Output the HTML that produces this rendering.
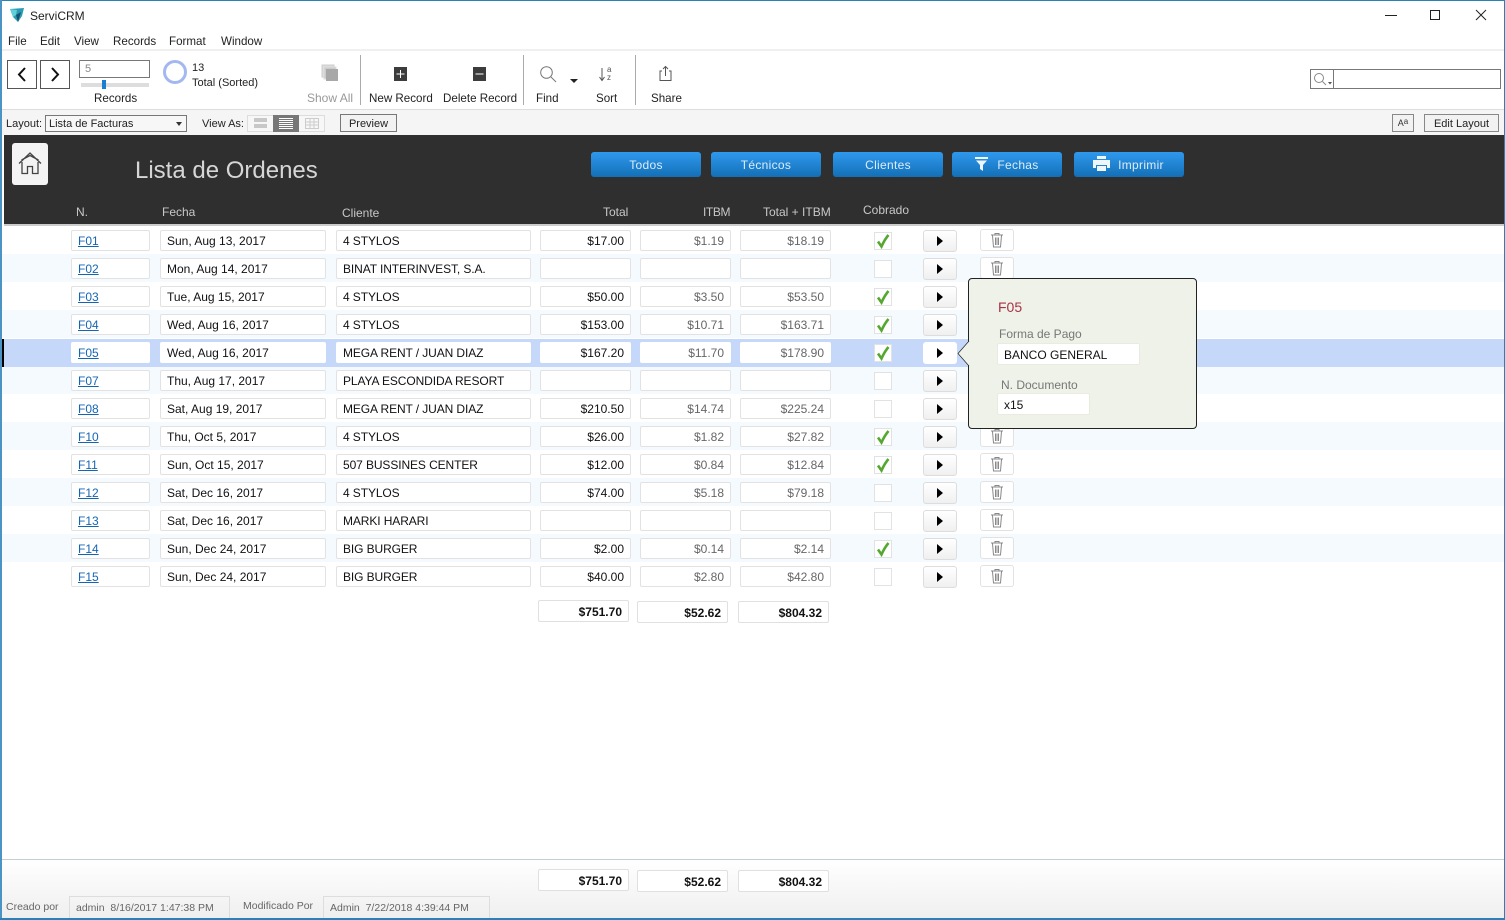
<!DOCTYPE html>
<html><head><meta charset="utf-8"><title>ServiCRM</title>
<style>
*{box-sizing:border-box}
html,body{margin:0;padding:0;width:1505px;height:920px;overflow:hidden;background:#fff;font-family:"Liberation Sans",sans-serif;font-size:11.6px;color:#222}
.a{position:absolute;white-space:nowrap}
#bl{position:absolute;left:0;top:0;width:2px;height:920px;background:#4a93c2;z-index:9}
#bt{position:absolute;left:0;top:0;width:1505px;height:1px;background:#2b80b5;z-index:9}
#br{position:absolute;right:0;top:0;width:1px;height:920px;background:#2b80b5;z-index:9}
#bb{position:absolute;left:0;top:918px;width:1505px;height:2px;background:#2b80b5;z-index:9}
.tb{font-size:11.6px;color:#222;text-align:center}
.sep{position:absolute;width:1px;background:#aaa;top:55px;height:50px}
.row{position:absolute;left:2px;width:1503px;height:28px}
.row.o{background:#f4fafd}
.row.s{background:#c6d8fa}
.row.s:before{content:"";position:absolute;left:0;top:0;width:2px;height:28px;background:#000}
.f{position:absolute;top:4px;height:21px;background:#fff;border:1px solid #e2e2e2;border-radius:2px;line-height:21px;padding:0 6px;font-size:12px;color:#111;white-space:nowrap;overflow:hidden}
.s .f{border-color:#fff}
.n{left:69px;width:79px;color:#1565b5;text-decoration:underline}
.d{left:158px;width:166px}
.c{left:334px;width:195px;letter-spacing:-.1px}
.t{left:538px;width:91px;text-align:right}
.i{left:638px;width:91px;text-align:right;color:#666}
.x{left:738px;width:91px;text-align:right;color:#666}
.k{position:absolute;left:872px;top:6px;width:18px;height:18px;background:#fff;border:1px solid #e2e2e2}
.k svg{position:absolute;left:-1px;top:-1px}
.b{position:absolute;left:921px;top:4px;width:34px;height:22px;background:linear-gradient(#fff,#f0f0f0);border:1px solid #ddd;border-radius:3px}
.s .b{background:#fff;border-color:#fff}
.b:after{content:"";position:absolute;left:13px;top:5px;border-left:6px solid #000;border-top:5px solid transparent;border-bottom:5px solid transparent}
.del{position:absolute;left:978px;top:3px;width:34px;height:22px;background:#fff;border:1px solid #e2e2e2;border-radius:3px}
.del svg{position:absolute;left:9px;top:2px}
.hd{position:absolute;color:#c8c8c8;font-size:12px;white-space:nowrap}
.btn{position:absolute;top:152px;width:110px;height:25px;border-radius:3px;background:linear-gradient(#2f99ee,#136fb6);color:#dcecf8;font-size:12px;letter-spacing:.3px;text-align:center;line-height:26px}
.sum{position:absolute;height:22px;width:91px;background:#fff;border:1px solid #e0e0e0;border-radius:2px;text-align:right;padding:0 6px;font-weight:bold;font-size:12px;line-height:22px;color:#111}
</style></head><body>
<div id="bt"></div><div id="bl"></div><div id="br"></div><div id="bb"></div>

<svg class="a" style="left:9px;top:7px" width="16" height="16" viewBox="0 0 16 16"><path d="M1 2 L15 1 L13 9 L9 15 L4 10Z" fill="#2a9bb5"/><path d="M1 2 L8 3 L7 8 L4 10Z" fill="#5fd0d8"/><path d="M7 8 L12 5 L9 15Z" fill="#17516f"/></svg>
<div class="a" style="left:30px;top:9px;font-size:12px;color:#222">ServiCRM</div>
<div class="a" style="left:1385px;top:15px;width:12px;height:1px;background:#222"></div>
<div class="a" style="left:1430px;top:10px;width:10px;height:10px;border:1px solid #222"></div>
<svg class="a" style="left:1475px;top:9px" width="12" height="12"><path d="M1 1L11 11M11 1L1 11" stroke="#222" stroke-width="1"/></svg>

<div class="a" style="left:8px;top:35px">File</div>
<div class="a" style="left:40px;top:35px">Edit</div>
<div class="a" style="left:74px;top:35px">View</div>
<div class="a" style="left:113px;top:35px">Records</div>
<div class="a" style="left:169px;top:35px">Format</div>
<div class="a" style="left:221px;top:35px">Window</div>
<div class="a" style="left:2px;top:49px;width:1502px;height:2px;background:#f0f0f0"></div>

<div class="a" style="left:7px;top:60px;width:30px;height:29px;border:1px solid #555"></div>
<svg class="a" style="left:16px;top:66px" width="12" height="17"><path d="M9 2L3 8.5L9 15" fill="none" stroke="#111" stroke-width="2"/></svg>
<div class="a" style="left:40px;top:60px;width:30px;height:29px;border:1px solid #555"></div>
<svg class="a" style="left:49px;top:66px" width="12" height="17"><path d="M3 2L9 8.5L3 15" fill="none" stroke="#111" stroke-width="2"/></svg>
<div class="a" style="left:79px;top:60px;width:71px;height:18px;border:1px solid #777;padding-left:5px;line-height:17px;color:#888;font-size:11px">5</div>
<div class="a" style="left:81px;top:83px;width:68px;height:4px;background:#ddd"></div>
<div class="a" style="left:102px;top:80px;width:4px;height:9px;background:#1a7fd0"></div>
<div class="a tb" style="left:94px;top:92px">Records</div>
<div class="a" style="left:163px;top:60px;width:24px;height:24px;border:3px solid #a3b8f0;border-radius:50%"></div>
<div class="a" style="left:192px;top:62px;font-size:11px">13</div>
<div class="a" style="left:192px;top:77px;font-size:11px">Total (Sorted)</div>

<svg class="a" style="left:321px;top:64px" width="18" height="18"><rect x="1" y="1" width="12" height="12" fill="#ddd" stroke="#ccc"/><rect x="3" y="3" width="12" height="12" fill="#ccc" stroke="#ddd"/><rect x="5" y="5" width="12" height="12" fill="#a8a8a8"/></svg>
<div class="a tb" style="left:307px;top:91px;color:#999;font-size:12px">Show All</div>
<div class="sep" style="left:360px"></div>
<svg class="a" style="left:394px;top:67px" width="13" height="14"><rect width="13" height="14" fill="#3c3c3c"/><path d="M6.5 3V11M2.5 7H10.500" stroke="#fff" stroke-width="1"/></svg>
<div class="a tb" style="left:369px;top:92px">New Record</div>
<svg class="a" style="left:473px;top:67px" width="13" height="14"><rect width="13" height="14" fill="#3c3c3c"/><path d="M2.500 7H10.500" stroke="#fff" stroke-width="1"/></svg>
<div class="a tb" style="left:443px;top:92px">Delete Record</div>
<div class="sep" style="left:523px"></div>
<svg class="a" style="left:539px;top:65px" width="18" height="18"><circle cx="7.500" cy="7.500" r="5.800" fill="none" stroke="#777"/><path d="M12 12L17 17" stroke="#777" stroke-width="1"/></svg>
<div class="a tb" style="left:536px;top:92px">Find</div>
<div class="a" style="left:570px;top:79px;border-top:4px solid #222;border-left:4px solid transparent;border-right:4px solid transparent"></div>
<svg class="a" style="left:598px;top:65px" width="16" height="18"><path d="M4 3V15M1.500 12L4 15.500L6.500 12" fill="none" stroke="#555"/><text x="9" y="7" font-size="8" fill="#555" font-family="Liberation Sans">a</text><text x="9" y="15" font-size="8" fill="#555" font-family="Liberation Sans">z</text></svg>
<div class="a tb" style="left:596px;top:92px">Sort</div>
<div class="sep" style="left:635px"></div>
<svg class="a" style="left:658px;top:65px" width="15" height="17"><path d="M4 6H2V15.500H13V6H11M7.500 11V1.500M5 4L7.500 1.500L10 4" fill="none" stroke="#555"/></svg>
<div class="a tb" style="left:651px;top:92px">Share</div>

<div class="a" style="left:1310px;top:69px;width:191px;height:20px;border:1px solid #777"></div>
<div class="a" style="left:1333px;top:69px;width:1px;height:20px;background:#777"></div>
<svg class="a" style="left:1313px;top:72px" width="19" height="14"><circle cx="6" cy="6" r="4.500" fill="none" stroke="#888"/><path d="M9.500 9.500L13 13" stroke="#888"/><path d="M15 10H19L17 12.500Z" fill="#555"/></svg>

<div class="a" style="left:2px;top:109px;width:1502px;height:26px;background:#f5f5f5;border-top:1px solid #ddd"></div>
<div class="a" style="left:6px;top:118px;font-size:11px">Layout:</div>
<div class="a" style="left:45px;top:115px;width:142px;height:17px;border:1px solid #777;background:#f7f7f7;padding-left:3px;font-size:11px;line-height:16px">Lista de Facturas</div>
<div class="a" style="left:176px;top:122px;border-top:4px solid #333;border-left:3px solid transparent;border-right:3px solid transparent"></div>
<div class="a" style="left:202px;top:118px;font-size:11px">View As:</div>
<div class="a" style="left:247px;top:115px;width:78px;height:17px;border:1px solid #ddd;background:#f7f7f7"></div>
<div class="a" style="left:254px;top:118px;width:13px;height:4px;background:#c8c8c8"></div>
<div class="a" style="left:254px;top:124px;width:13px;height:4px;background:#c8c8c8"></div>
<div class="a" style="left:273px;top:115px;width:26px;height:17px;background:#777"></div>
<div class="a" style="left:279px;top:118px;width:14px;height:11px;background:repeating-linear-gradient(#fff 0 1px,#777 1px 2px)"></div>
<svg class="a" style="left:305px;top:118px" width="14" height="11"><path d="M.5.500H13.500V10.500H.5ZM.5 4H13.500M.5 7H13.500M5 .500V10.500M9 .500V10.500" fill="none" stroke="#ccc"/></svg>
<div class="a" style="left:340px;top:114px;width:57px;height:18px;border:1px solid #777;background:#f2f2f2;text-align:center;font-size:11px;line-height:18px">Preview</div>
<div class="a" style="left:1392px;top:114px;width:22px;height:18px;border:1px solid #888;background:#f2f2f2;text-align:center;font-size:9px;line-height:17px;color:#333">A<span style="position:relative;top:-2px;font-size:8px">a</span></div>
<div class="a" style="left:1424px;top:114px;width:75px;height:18px;border:1px solid #888;background:#f2f2f2;text-align:center;font-size:11px;line-height:18px">Edit Layout</div>

<div class="a" style="left:4px;top:135px;width:1500px;height:89px;background:#2f2f2f"></div>
<div class="a" style="left:4px;top:224px;width:1500px;height:2px;background:#ccc"></div>
<div class="a" style="left:12px;top:143px;width:36px;height:42px;background:#f4f4f4;border-radius:3px"></div>
<svg class="a" style="left:18px;top:152px" width="24" height="23" viewBox="0 0 24 23"><path d="M1 11.500L12 1L23 11.500M4 10V21.500H9.500V14.500H14.500V21.500H20V10M3.500 8L12 3.500L20.500 8" fill="none" stroke="#444" stroke-width="1.300"/></svg>
<div class="a" style="left:135px;top:157px;font-size:24px;color:#d6d6d6">Lista de Ordenes</div>

<div class="btn" style="left:591px">Todos</div>
<div class="btn" style="left:711px">Técnicos</div>
<div class="btn" style="left:833px">Clientes</div>
<div class="btn" style="left:952px;padding-left:22px">Fechas</div>
<svg class="a" style="left:975px;top:157px" width="13" height="14"><path d="M0 0H13V2H0ZM1 3.500H12L8 8V14L5 12V8Z" fill="#eef6fc"/></svg>
<div class="btn" style="left:1074px;padding-left:24px">Imprimir</div>
<svg class="a" style="left:1093px;top:156px" width="17" height="15"><path d="M4 0H13V3H4ZM0 4H17V12H14V9H3V12H0ZM4 10H13V15H4Z" fill="#eef6fc"/></svg>

<div class="hd" style="left:76px;top:205px">N.</div>
<div class="hd" style="left:162px;top:205px">Fecha</div>
<div class="hd" style="left:342px;top:206px">Cliente</div>
<div class="hd" style="left:603px;top:205px">Total</div>
<div class="hd" style="left:703px;top:205px;letter-spacing:-.4px">ITBM</div>
<div class="hd" style="left:763px;top:205px">Total + ITBM</div>
<div class="hd" style="left:863px;top:203px">Cobrado</div>

<svg width="0" height="0" style="position:absolute"><defs>
<symbol id="ck" viewBox="0 0 18 18"><path d="M4 9.500L7.500 14.500C9.500 10 11.500 6.500 14.500 3" fill="none" stroke="#55a82f" stroke-width="2.600"/></symbol>
<symbol id="tr" viewBox="0 0 14 16"><path d="M1 3H13M5 3V1.500H9V3M2.500 3.500L3.500 15H10.500L11.500 3.500M5.500 5.500V13M7 5.500V13M8.500 5.500V13" fill="none" stroke="#888"/></symbol>
</defs></svg>

<div class="row" style="top:226px"><div class="f n">F01</div><div class="f d">Sun, Aug 13, 2017</div><div class="f c">4 STYLOS</div><div class="f t">$17.00</div><div class="f i">$1.19</div><div class="f x">$18.19</div><div class="k"><svg width="18" height="18"><use href="#ck"/></svg></div><div class="b"></div><div class="del"><svg width="14" height="16"><use href="#tr"/></svg></div></div>
<div class="row o" style="top:254px"><div class="f n">F02</div><div class="f d">Mon, Aug 14, 2017</div><div class="f c">BINAT INTERINVEST, S.A.</div><div class="f t"></div><div class="f i"></div><div class="f x"></div><div class="k"></div><div class="b"></div><div class="del"><svg width="14" height="16"><use href="#tr"/></svg></div></div>
<div class="row" style="top:282px"><div class="f n">F03</div><div class="f d">Tue, Aug 15, 2017</div><div class="f c">4 STYLOS</div><div class="f t">$50.00</div><div class="f i">$3.50</div><div class="f x">$53.50</div><div class="k"><svg width="18" height="18"><use href="#ck"/></svg></div><div class="b"></div><div class="del"><svg width="14" height="16"><use href="#tr"/></svg></div></div>
<div class="row o" style="top:310px"><div class="f n">F04</div><div class="f d">Wed, Aug 16, 2017</div><div class="f c">4 STYLOS</div><div class="f t">$153.00</div><div class="f i">$10.71</div><div class="f x">$163.71</div><div class="k"><svg width="18" height="18"><use href="#ck"/></svg></div><div class="b"></div><div class="del"><svg width="14" height="16"><use href="#tr"/></svg></div></div>
<div class="row s" style="top:339px;height:28px"><div class="f n" style="top:3px">F05</div><div class="f d" style="top:3px">Wed, Aug 16, 2017</div><div class="f c" style="top:3px">MEGA RENT / JUAN DIAZ</div><div class="f t" style="top:3px">$167.20</div><div class="f i" style="top:3px">$11.70</div><div class="f x" style="top:3px">$178.90</div><div class="k" style="top:5px"><svg width="18" height="18"><use href="#ck"/></svg></div><div class="b" style="top:3px"></div></div>
<div class="row o" style="top:367px;height:27px"><div class="f n" style="top:3px">F07</div><div class="f d" style="top:3px">Thu, Aug 17, 2017</div><div class="f c" style="top:3px">PLAYA ESCONDIDA RESORT</div><div class="f t" style="top:3px"></div><div class="f i" style="top:3px"></div><div class="f x" style="top:3px"></div><div class="k" style="top:5px"></div><div class="b" style="top:3px"></div></div>
<div class="row" style="top:394px"><div class="f n">F08</div><div class="f d">Sat, Aug 19, 2017</div><div class="f c">MEGA RENT / JUAN DIAZ</div><div class="f t">$210.50</div><div class="f i">$14.74</div><div class="f x">$225.24</div><div class="k"></div><div class="b"></div></div>
<div class="row o" style="top:422px"><div class="f n">F10</div><div class="f d">Thu, Oct 5, 2017</div><div class="f c">4 STYLOS</div><div class="f t">$26.00</div><div class="f i">$1.82</div><div class="f x">$27.82</div><div class="k"><svg width="18" height="18"><use href="#ck"/></svg></div><div class="b"></div><div class="del"><svg width="14" height="16"><use href="#tr"/></svg></div></div>
<div class="row" style="top:450px"><div class="f n">F11</div><div class="f d">Sun, Oct 15, 2017</div><div class="f c">507 BUSSINES CENTER</div><div class="f t">$12.00</div><div class="f i">$0.84</div><div class="f x">$12.84</div><div class="k"><svg width="18" height="18"><use href="#ck"/></svg></div><div class="b"></div><div class="del"><svg width="14" height="16"><use href="#tr"/></svg></div></div>
<div class="row o" style="top:478px"><div class="f n">F12</div><div class="f d">Sat, Dec 16, 2017</div><div class="f c">4 STYLOS</div><div class="f t">$74.00</div><div class="f i">$5.18</div><div class="f x">$79.18</div><div class="k"></div><div class="b"></div><div class="del"><svg width="14" height="16"><use href="#tr"/></svg></div></div>
<div class="row" style="top:506px"><div class="f n">F13</div><div class="f d">Sat, Dec 16, 2017</div><div class="f c">MARKI HARARI</div><div class="f t"></div><div class="f i"></div><div class="f x"></div><div class="k"></div><div class="b"></div><div class="del"><svg width="14" height="16"><use href="#tr"/></svg></div></div>
<div class="row o" style="top:534px"><div class="f n">F14</div><div class="f d">Sun, Dec 24, 2017</div><div class="f c">BIG BURGER</div><div class="f t">$2.00</div><div class="f i">$0.14</div><div class="f x">$2.14</div><div class="k"><svg width="18" height="18"><use href="#ck"/></svg></div><div class="b"></div><div class="del"><svg width="14" height="16"><use href="#tr"/></svg></div></div>
<div class="row" style="top:562px"><div class="f n">F15</div><div class="f d">Sun, Dec 24, 2017</div><div class="f c">BIG BURGER</div><div class="f t">$40.00</div><div class="f i">$2.80</div><div class="f x">$42.80</div><div class="k"></div><div class="b"></div><div class="del"><svg width="14" height="16"><use href="#tr"/></svg></div></div>

<div class="sum" style="left:538px;top:600px">$751.70</div>
<div class="sum" style="left:637px;top:601px">$52.62</div>
<div class="sum" style="left:738px;top:601px">$804.32</div>

<div class="a" style="left:968px;top:278px;width:229px;height:151px;background:#eef2e8;border:1px solid #222;border-radius:4px;z-index:3"></div>
<svg class="a" style="left:957px;top:341px;z-index:4" width="13" height="26"><path d="M12 0L1 12.500L12 25" fill="#eef2e8" stroke="#222" stroke-width=".7"/><path d="M12 1V24H12.900V1Z" fill="#eef2e8"/></svg>
<div class="a" style="left:998px;top:299px;font-size:14px;color:#a83248;z-index:4">F05</div>
<div class="a" style="left:999px;top:327px;color:#777;font-size:12px;z-index:4">Forma de Pago</div>
<div class="a" style="left:997px;top:343px;width:143px;height:22px;background:#fff;border:1px solid #e8ece0;border-radius:2px;padding-left:6px;line-height:22px;font-size:12px;color:#111;z-index:4">BANCO GENERAL</div>
<div class="a" style="left:1001px;top:378px;color:#777;font-size:12px;z-index:4">N. Documento</div>
<div class="a" style="left:997px;top:393px;width:93px;height:22px;background:#fff;border:1px solid #e8ece0;border-radius:2px;padding-left:6px;line-height:22px;font-size:12px;color:#111;z-index:4">x15</div>

<div class="a" style="left:2px;top:859px;width:1502px;height:59px;border-top:1px solid #c5ced2;background:linear-gradient(#fff,#efefef)"></div>
<div class="sum" style="left:538px;top:869px">$751.70</div>
<div class="sum" style="left:637px;top:870px">$52.62</div>
<div class="sum" style="left:738px;top:870px">$804.32</div>
<div class="a" style="left:6px;top:901px;font-size:10.500px;color:#666">Creado por</div>
<div class="a" style="left:69px;top:896px;width:161px;height:22px;border:1px solid #ddd;border-bottom:0;padding-left:6px;font-size:10.500px;line-height:23px;color:#666">admin&nbsp; 8/16/2017 1:47:38 PM</div>
<div class="a" style="left:243px;top:900px;font-size:10.500px;color:#666">Modificado Por</div>
<div class="a" style="left:323px;top:896px;width:167px;height:22px;border:1px solid #ddd;border-bottom:0;padding-left:6px;font-size:10.500px;line-height:23px;color:#666">Admin&nbsp; 7/22/2018 4:39:44 PM</div>
</body></html>
